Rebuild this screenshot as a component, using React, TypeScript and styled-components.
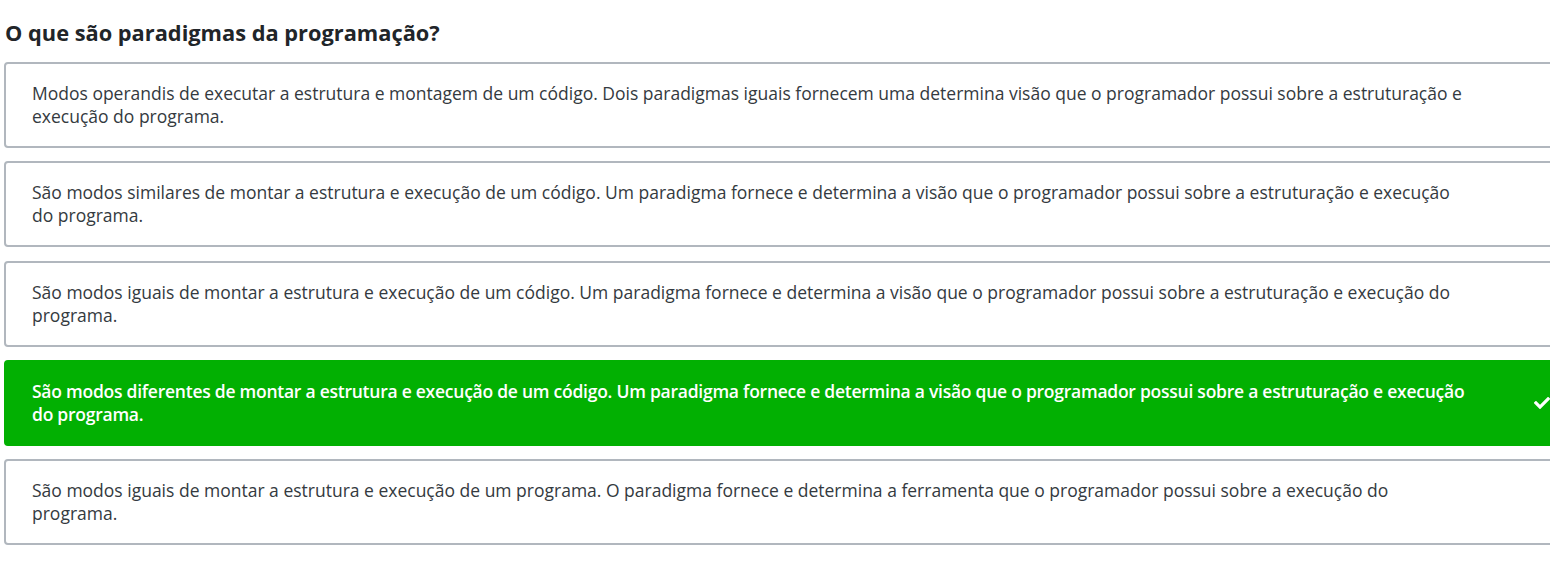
import React from 'react';
import styled, { createGlobalStyle } from 'styled-components';

const GlobalStyle = createGlobalStyle`
  html, body {
    margin: 0;
    padding: 0;
    background: #ffffff;
    overflow: hidden;
  }
  body {
    font-family: 'Open Sans', 'Liberation Sans', sans-serif;
    color: #343a40;
  }
`;

const options = [
  {
    id: 'a',
    text: 'Modos operandis de executar a estrutura e montagem de um código. Dois paradigmas iguais fornecem uma determina visão que o programador possui sobre a estruturação e execução do programa.',
  },
  {
    id: 'b',
    text: 'São modos similares de montar a estrutura e execução de um código. Um paradigma fornece e determina a visão que o programador possui sobre a estruturação e execução do programa.',
  },
  {
    id: 'c',
    text: 'São modos iguais de montar a estrutura e execução de um código. Um paradigma fornece e determina a visão que o programador possui sobre a estruturação e execução do programa.',
  },
  {
    id: 'd',
    text: 'São modos diferentes de montar a estrutura e execução de um código. Um paradigma fornece e determina a visão que o programador possui sobre a estruturação e execução do programa.',
  },
  {
    id: 'e',
    text: 'São modos iguais de montar a estrutura e execução de um programa. O paradigma fornece e determina a ferramenta que o programador possui sobre a execução do programa.',
  },
];

const CORRECT_ID = 'd';

const StyledPage = styled.div({
  padding: '19px 0 0 4px',
  width: 1562,
});

const StyledQuestion = styled.h3({
  margin: '0 0 15px 1px',
  fontSize: 21.8,
  lineHeight: '28px',
  fontWeight: 700,
  color: '#212529',
});

const StyledList = styled.div({
  display: 'flex',
  flexDirection: 'column',
  gap: 13.25,
});

const StyledOption = styled.div<{ $correct?: boolean }>(({ $correct }) => ({
  display: 'flex',
  alignItems: 'center',
  boxSizing: 'border-box',
  minHeight: 86,
  padding: '18px 14px 18px 26px',
  border: `2px solid ${$correct ? '#02b002' : '#b1b7be'}`,
  borderRadius: 4,
  background: $correct ? '#02b002' : '#ffffff',
  color: $correct ? '#ffffff' : '#343a40',
  fontWeight: $correct ? 600 : 400,
  letterSpacing: $correct ? '-0.25px' : 'normal',
}));

const StyledText = styled.p({
  margin: 0,
  width: 1436,
  flex: 'none',
  fontSize: 17.5,
  lineHeight: '23px',
});

const StyledCheck = styled.svg({
  marginLeft: 'auto',
  width: 16,
  height: 12,
  flex: 'none',
});

const CheckIcon = () => (
  <StyledCheck viewBox="0 66 512 384">
    <path
      fill="#ffffff"
      d="M173.898 439.404l-166.4-166.4c-9.997-9.997-9.997-26.206 0-36.204l36.203-36.204c9.997-9.998 26.207-9.998 36.204 0L192 312.69 432.095 72.596c9.997-9.997 26.207-9.997 36.204 0l36.203 36.204c9.997 9.997 9.997 26.206 0 36.204l-294.4 294.401c-9.998 9.997-26.207 9.997-36.204-.001z"
    />
  </StyledCheck>
);

const App: React.FunctionComponent = () => (
  <StyledPage>
    <GlobalStyle />
    <StyledQuestion>O que são paradigmas da programação?</StyledQuestion>
    <StyledList>
      {options.map(option => (
        <StyledOption key={option.id} $correct={option.id === CORRECT_ID}>
          <StyledText>{option.text}</StyledText>
          {option.id === CORRECT_ID && <CheckIcon />}
        </StyledOption>
      ))}
    </StyledList>
  </StyledPage>
);

export default App;
